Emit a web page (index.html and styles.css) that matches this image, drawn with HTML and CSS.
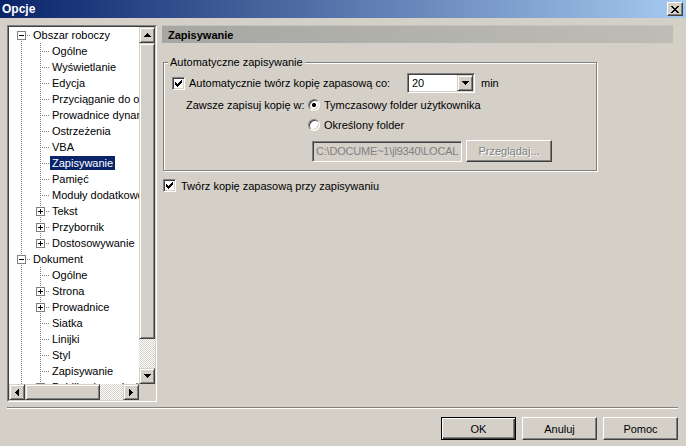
FILE: index.html
```html
<!DOCTYPE html>
<html lang="pl">

<head>
    <meta charset="UTF-8">
    <title>Opcje</title>
    <link rel="stylesheet" href="styles.css">
</head>

<body>
    <div class="window">
        <div class="titlebar">
            <span class="title">Opcje</span>
            <span class="close-btn">
                <svg width="8" height="7" viewBox="0 0 8 7" shape-rendering="crispEdges"><path d="M0 0h2v1h1v1h2V1h1V0h2v1H7v1H6v1H5v1h1v1h1v1h1v1H6V6H5V5H3v1H2v1H0V6h1V5h1V4h1V3H2V2H1V1H0z" fill="#000"/></svg>
            </span>
        </div>

        <div class="main">
            <div class="tree-frame">
                <div class="tree-inner">
                    <div class="tree-view">
                        <ul class="tree">
                            <li class="node"><span class="guide first"><span class="box minus"></span></span><span class="label">Obszar roboczy</span></li>
                            <li class="node"><span class="guide pipe"></span><span class="guide tee"></span><span class="label">Ogólne</span></li>
                            <li class="node"><span class="guide pipe"></span><span class="guide tee"></span><span class="label">Wyświetlanie</span></li>
                            <li class="node"><span class="guide pipe"></span><span class="guide tee"></span><span class="label">Edycja</span></li>
                            <li class="node"><span class="guide pipe"></span><span class="guide tee"></span><span class="label">Przyciąganie do obiektów</span></li>
                            <li class="node"><span class="guide pipe"></span><span class="guide tee"></span><span class="label">Prowadnice dynamiczne</span></li>
                            <li class="node"><span class="guide pipe"></span><span class="guide tee"></span><span class="label">Ostrzeżenia</span></li>
                            <li class="node"><span class="guide pipe"></span><span class="guide tee"></span><span class="label">VBA</span></li>
                            <li class="node"><span class="guide pipe"></span><span class="guide tee"></span><span class="label selected">Zapisywanie</span></li>
                            <li class="node"><span class="guide pipe"></span><span class="guide tee"></span><span class="label">Pamięć</span></li>
                            <li class="node"><span class="guide pipe"></span><span class="guide tee"></span><span class="label">Moduły dodatkowe</span></li>
                            <li class="node"><span class="guide pipe"></span><span class="guide tee"><span class="box plus"></span></span><span class="label">Tekst</span></li>
                            <li class="node"><span class="guide pipe"></span><span class="guide tee"><span class="box plus"></span></span><span class="label">Przybornik</span></li>
                            <li class="node"><span class="guide pipe"></span><span class="guide ell"><span class="box plus"></span></span><span class="label">Dostosowywanie</span></li>
                            <li class="node"><span class="guide tee"><span class="box minus"></span></span><span class="label">Dokument</span></li>
                            <li class="node"><span class="guide pipe"></span><span class="guide tee"></span><span class="label">Ogólne</span></li>
                            <li class="node"><span class="guide pipe"></span><span class="guide tee"><span class="box plus"></span></span><span class="label">Strona</span></li>
                            <li class="node"><span class="guide pipe"></span><span class="guide tee"><span class="box plus"></span></span><span class="label">Prowadnice</span></li>
                            <li class="node"><span class="guide pipe"></span><span class="guide tee"></span><span class="label">Siatka</span></li>
                            <li class="node"><span class="guide pipe"></span><span class="guide tee"></span><span class="label">Linijki</span></li>
                            <li class="node"><span class="guide pipe"></span><span class="guide tee"></span><span class="label">Styl</span></li>
                            <li class="node"><span class="guide pipe"></span><span class="guide tee"></span><span class="label">Zapisywanie</span></li>
                            <li class="node"><span class="guide pipe"></span><span class="guide tee"><span class="box plus"></span></span><span class="label">Publikacja w sieci Web</span></li>
                        </ul>
                    </div>

                    <div class="vscroll">
                        <span class="sb-btn"><svg width="7" height="4" shape-rendering="crispEdges"><path d="M3 0h1v1h1v1h1v1h1v1H0V3h1V2h1V1h1z"/></svg></span>
                        <span class="sb-thumb v"></span>
                        <span class="sb-track"></span>
                        <span class="sb-btn"><svg width="7" height="4" shape-rendering="crispEdges"><path d="M0 0h7v1H6v1H5v1H4v1H3V3H2V2H1V1H0z"/></svg></span>
                    </div>

                    <div class="hscroll">
                        <span class="sb-btn"><svg width="4" height="7" shape-rendering="crispEdges"><path d="M3 0h1v7H3V6H2V5H1V4H0V3h1V2h1V1h1z"/></svg></span>
                        <span class="sb-thumb h"></span>
                        <span class="sb-track"></span>
                        <span class="sb-btn"><svg width="4" height="7" shape-rendering="crispEdges"><path d="M0 0h1v1h1v1h1v1h1v1H3v1H2v1H1v1H0z"/></svg></span>
                    </div>

                    <div class="corner"></div>
                </div>
            </div>

            <div class="page">
                <div class="page-header">Zapisywanie</div>

                <fieldset class="group">
                    <legend>Automatyczne zapisywanie</legend>

                    <div class="row row-auto">
                        <span class="checkbox checked"><svg width="7" height="7" shape-rendering="crispEdges"><path d="M6 0h1v3H6v1H5v1H4v1H3v1H2V6H1V5H0V2h1v1h1v1h1V3h1V2h1V1h1z"/></svg></span>
                        <span class="auto-text">Automatycznie twórz kopię zapasową co:</span>
                        <span class="combo">
                            <span class="combo-value">20</span>
                            <span class="sb-btn"><svg width="7" height="4" shape-rendering="crispEdges"><path d="M0 0h7v1H6v1H5v1H4v1H3V3H2V2H1V1H0z"/></svg></span>
                        </span>
                        <span class="unit">min</span>
                    </div>

                    <div class="row row-where">
                        <span class="where-text">Zawsze zapisuj kopię w:</span>
                        <span class="radio on"></span>
                        <span class="radio-text">Tymczasowy folder użytkownika</span>
                    </div>

                    <div class="row row-folder">
                        <span class="radio"></span>
                        <span class="radio-text">Określony folder</span>
                    </div>

                    <div class="row row-path">
                        <span class="textbox disabled">C:\DOCUME~1\jl9340\LOCAL</span>
                        <span class="btn browse disabled">Przeglądaj...</span>
                    </div>
                </fieldset>

                <div class="row row-backup">
                    <span class="checkbox checked"><svg width="7" height="7" shape-rendering="crispEdges"><path d="M6 0h1v3H6v1H5v1H4v1H3v1H2V6H1V5H0V2h1v1h1v1h1V3h1V2h1V1h1z"/></svg></span>
                    <span class="backup-text">Twórz kopię zapasową przy zapisywaniu</span>
                </div>
            </div>
        </div>

        <div class="separator"></div>

        <div class="buttons">
            <span class="btn default">OK</span>
            <span class="btn">Anuluj</span>
            <span class="btn">Pomoc</span>
        </div>
    </div>
</body>

</html>
```

FILE: styles.css
```css
* {
    box-sizing: border-box;
}

body {
    margin: 0;
    font-family: 'Liberation Sans', Arial, sans-serif;
    font-size: 11px;
    color: #000;
    background-color: #d4d0c8;
}

.window {
    width: 686px;
    height: 446px;
    overflow: hidden;
    background-color: #d4d0c8;
}

/* title bar */
.titlebar {
    height: 18px;
    display: flex;
    align-items: center;
    justify-content: space-between;
    padding: 0 3px 0 2px;
    background: linear-gradient(to right, #0a246a, #a6caf0);
}

.title {
    color: #fff;
    font-weight: bold;
    font-size: 12px;
}

.close-btn {
    width: 16px;
    height: 14px;
    display: flex;
    align-items: center;
    justify-content: center;
    background-color: #d4d0c8;
    border: 1px solid;
    border-color: #fff #404040 #404040 #fff;
    box-shadow: inset -1px -1px #808080;
}

.main {
    display: flex;
    padding: 7px 13px 0 7px;
}

/* tree */
.tree-frame {
    width: 150px;
    height: 377px;
    border: 1px solid;
    border-color: #808080 #fff #fff #808080;
}

.tree-inner {
    height: 100%;
    border: 1px solid;
    border-color: #404040 #d4d0c8 #d4d0c8 #404040;
    display: grid;
    grid-template-columns: 130px 16px;
    grid-template-rows: 357px 16px;
}

.tree-view {
    background-color: #fff;
    overflow: hidden;
}

.tree {
    list-style: none;
    margin: 0;
    padding: 0 0 0 3px;
}

.node {
    display: flex;
    align-items: center;
    height: 16px;
    white-space: nowrap;
}

.guide {
    flex: none;
    width: 19px;
    height: 16px;
    display: flex;
    align-items: center;
}

.pipe {
    background: repeating-linear-gradient(to bottom, #808080 0 1px, transparent 1px 2px) 9px 0 / 1px 16px no-repeat;
}

.tee {
    background:
        repeating-linear-gradient(to right, #808080 0 1px, transparent 1px 2px) 9px 8px / 10px 1px no-repeat,
        repeating-linear-gradient(to bottom, #808080 0 1px, transparent 1px 2px) 9px 0 / 1px 16px no-repeat;
}

.ell {
    background:
        repeating-linear-gradient(to right, #808080 0 1px, transparent 1px 2px) 9px 8px / 10px 1px no-repeat,
        repeating-linear-gradient(to bottom, #808080 0 1px, transparent 1px 2px) 9px 0 / 1px 9px no-repeat;
}

.first {
    background:
        repeating-linear-gradient(to right, #808080 0 1px, transparent 1px 2px) 9px 8px / 10px 1px no-repeat,
        repeating-linear-gradient(to bottom, #808080 0 1px, transparent 1px 2px) 9px 8px / 1px 8px no-repeat;
}

.box {
    width: 9px;
    height: 9px;
    margin: 0 0 0 5px;
    border: 1px solid #808080;
}

.minus {
    background: linear-gradient(#000, #000) center / 5px 1px no-repeat, #fff;
}

.plus {
    background:
        linear-gradient(#000, #000) center / 5px 1px no-repeat,
        linear-gradient(#000, #000) center / 1px 5px no-repeat,
        #fff;
}

.label {
    height: 14px;
    line-height: 14px;
    padding: 0 2px;
}

.label.selected {
    background-color: #0a246a;
    color: #fff;
}

/* scrollbars */
.sb-btn {
    flex: none;
    width: 16px;
    height: 16px;
    display: flex;
    align-items: center;
    justify-content: center;
    background-color: #d4d0c8;
    border: 1px solid;
    border-color: #d4d0c8 #404040 #404040 #d4d0c8;
    box-shadow: inset 1px 1px #fff, inset -1px -1px #808080;
}

.sb-thumb {
    flex: none;
    background-color: #d4d0c8;
    border: 1px solid;
    border-color: #d4d0c8 #404040 #404040 #d4d0c8;
    box-shadow: inset 1px 1px #fff, inset -1px -1px #808080;
}

.sb-thumb.v {
    height: 296px;
}

.sb-thumb.h {
    width: 75px;
}

.sb-track {
    flex: 1;
    background: conic-gradient(#fff 25%, #d4d0c8 0 50%, #fff 0 75%, #d4d0c8 0) 0 0 / 2px 2px;
}

.vscroll {
    display: flex;
    flex-direction: column;
}

.hscroll {
    display: flex;
}

.corner {
    background-color: #d4d0c8;
}

/* right page */
.page {
    flex: 1;
    margin-left: 5px;
}

.page-header {
    height: 18px;
    line-height: 18px;
    padding-left: 6px;
    font-weight: bold;
    background: linear-gradient(to right, #a6a6a3, #bebdb5);
    border-top: 1px solid #c4c2ba;
}

.group {
    width: 434px;
    margin: 13px 0 0 1px;
    padding: 0 0 8px 0;
    border: 1px solid #808080;
    box-shadow: inset 1px 1px #fff, 1px 1px #fff;
}

.group legend {
    margin-left: 4px;
    padding: 0 2px;
    line-height: 13px;
    background-color: #d4d0c8;
}

.row {
    display: flex;
    align-items: center;
}

.row-auto {
    height: 20px;
    margin-top: 4px;
    padding-left: 8px;
}

.row-where {
    height: 20px;
    margin-top: 2px;
    padding-left: 22px;
}

.row-folder {
    height: 20px;
    padding-left: 144px;
}

.row-path {
    margin-top: 5px;
    padding-left: 148px;
}

.checkbox {
    flex: none;
    width: 13px;
    height: 13px;
    display: flex;
    align-items: center;
    justify-content: center;
    background-color: #fff;
    border: 1px solid;
    border-color: #808080 #fff #fff #808080;
    box-shadow: inset 1px 1px #404040, inset -1px -1px #d4d0c8;
}

.auto-text {
    width: 222px;
    padding-left: 4px;
}

.combo {
    width: 68px;
    height: 20px;
    display: flex;
    align-items: center;
    padding: 1px;
    background-color: #fff;
    border: 1px solid;
    border-color: #808080 #fff #fff #808080;
    box-shadow: inset 1px 1px #404040, inset -1px -1px #d4d0c8;
}

.combo-value {
    flex: 1;
    padding-left: 3px;
}

.unit {
    margin-left: 6px;
}

.where-text {
    width: 122px;
}

.radio {
    flex: none;
    width: 12px;
    height: 12px;
    border-radius: 50%;
    background-color: #fff;
    border: 1px solid;
    border-color: #808080 #fff #fff #808080;
    box-shadow: inset 1px 1px #404040, inset -1px -1px #d4d0c8;
}

.radio.on {
    background: radial-gradient(circle, #000 0 2px, #fff 2.2px);
}

.radio-text {
    padding-left: 4px;
}

.textbox {
    width: 150px;
    height: 21px;
    line-height: 19px;
    padding-left: 3px;
    overflow: hidden;
    white-space: nowrap;
    letter-spacing: -0.2px;
    border: 1px solid;
    border-color: #808080 #fff #fff #808080;
    box-shadow: inset 1px 1px #404040, inset -1px -1px #d4d0c8;
}

.textbox.disabled {
    background-color: #d4d0c8;
    color: #808080;
}

.btn {
    width: 75px;
    height: 23px;
    display: flex;
    align-items: center;
    justify-content: center;
    background-color: #d4d0c8;
    border: 1px solid;
    border-color: #fff #404040 #404040 #fff;
    box-shadow: inset -1px -1px #808080;
}

.btn.disabled {
    color: #808080;
    text-shadow: 1px 1px #fff;
}

.btn.browse {
    width: 86px;
    height: 22px;
    margin-left: 4px;
}

.btn.default {
    border: 1px solid #000;
    box-shadow: inset 1px 1px #fff, inset -1px -1px #404040, inset -2px -2px #808080;
}

.row-backup {
    margin-top: 8px;
    padding-left: 1px;
}

.backup-text {
    padding-left: 5px;
}

/* bottom */
.separator {
    height: 2px;
    margin: 5px 8px 0 7px;
    border-top: 1px solid #808080;
    border-bottom: 1px solid #fff;
}

.buttons {
    display: flex;
    justify-content: flex-end;
    gap: 6px;
    padding: 8px 8px 0 0;
}
```
